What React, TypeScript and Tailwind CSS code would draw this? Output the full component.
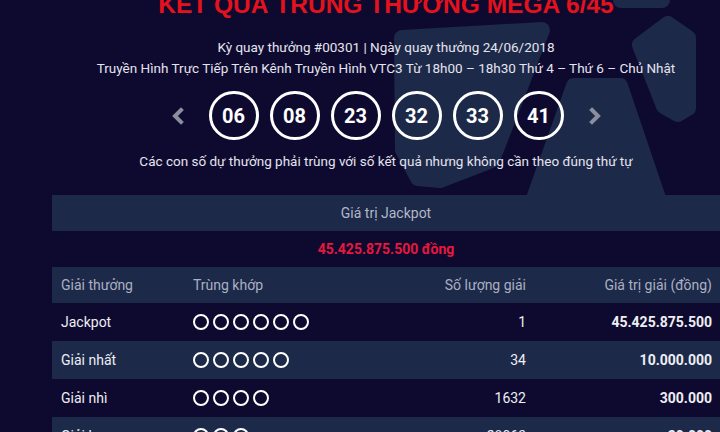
import React from "react";

const balls = ["06", "08", "23", "32", "33", "41"];

const rows = [
  { name: "Jackpot", n: 6, count: "1", value: "45.425.875.500", band: false },
  { name: "Giải nhất", n: 5, count: "34", value: "10.000.000", band: true },
  { name: "Giải nhì", n: 4, count: "1632", value: "300.000", band: false },
  { name: "Giải ba", n: 3, count: "28063", value: "30.000", band: true },
];

function Chevron({ dir }: { dir: "left" | "right" }) {
  return (
    <svg width="14" height="18" viewBox="0 0 14 18" className="shrink-0">
      <path
        d={dir === "left" ? "M10 3 L4 9 L10 15" : "M4 3 L10 9 L4 15"}
        fill="none"
        stroke="#8b8e9f"
        strokeWidth="4"
        strokeLinecap="square"
        strokeLinejoin="miter"
      />
    </svg>
  );
}

function Background() {
  const c = "#1d2949";
  return (
    <svg className="absolute left-0 top-0" width="720" height="432" viewBox="0 0 720 432">
      <g fill={c} stroke={c} strokeWidth="16" strokeLinejoin="round">
        <polygon points="402,38 542,30 492,160 440,180 418,178 403,150" />
        <polygon points="574,86 620,86 662,210 530,210" />
        <polygon points="640,45 668,24 688,38 688,108 678,114 664,106" />
        <rect x="621" y="-20" width="41" height="20" />
      </g>
    </svg>
  );
}

export default function App() {
  return (
    <div
      className="relative w-[720px] h-[432px] overflow-hidden bg-[#0e0a2f]"
      style={{ fontFamily: "Roboto, 'Noto Sans', sans-serif" }}
    >
      <Background />
      <div className="relative pl-[52px]">
        <div className="w-[668px] flex flex-col items-center">
          <div
            className="mt-[-9px] h-[28px] leading-[28px] text-[24.5px] font-bold text-[#e3121c] whitespace-nowrap"
            style={{ fontFamily: "'Liberation Sans', Arial, sans-serif" }}
          >
            KẾT QUẢ TRÚNG THƯỞNG MEGA 6/45
          </div>
          <div className="mt-[18px] text-[13.5px] leading-[21px] text-[#e4e4ee] whitespace-nowrap">
            Kỳ quay thưởng #00301 | Ngày quay thưởng 24/06/2018
          </div>
          <div className="text-[13.5px] leading-[21px] text-[#e4e4ee] whitespace-nowrap">
            Truyền Hình Trực Tiếp Trên Kênh Truyền Hình VTC3 Từ 18h00 – 18h30 Thứ 4 – Thứ 6 – Chủ Nhật
          </div>
          <div className="mt-[12px] flex items-center">
            <Chevron dir="left" />
            <div className="ml-[24px] mr-[24px] flex gap-[11px]">
              {balls.map((b) => (
                <div
                  key={b}
                  className="w-[50px] h-[49px] rounded-full border-[3px] border-white flex items-center justify-center text-white text-[20px] font-bold"
                >
                  {b}
                </div>
              ))}
            </div>
            <Chevron dir="right" />
          </div>
          <div className="mt-[11px] text-[13.5px] leading-[20px] text-[#e4e4ee] whitespace-nowrap">
            Các con số dự thưởng phải trùng với số kết quả nhưng không cần theo đúng thứ tự
          </div>
        </div>
        <div className="mt-[24px] w-[668px]">
          <div className="h-[36px] bg-[#1c2949] flex items-center justify-center text-[14px] text-[#b3b7c7]">
            Giá trị Jackpot
          </div>
          <div className="h-[36px] bg-[#0e0a2f] flex items-center justify-center text-[14px] font-bold text-[#e6183e]">
            45.425.875.500 đồng
          </div>
          <div className="h-[36px] bg-[#1c2949] grid grid-cols-[141px_207px_126px_194px] items-center text-[14px] text-[#abb0c2]">
            <div className="pl-[9px]">Giải thưởng</div>
            <div>Trùng khớp</div>
            <div className="text-right">Số lượng giải</div>
            <div className="text-right pr-[8px]">Giá trị giải (đồng)</div>
          </div>
          {rows.map((r) => (
            <div
              key={r.name}
              className={`h-[38px] grid grid-cols-[141px_207px_126px_194px] items-center text-[14px] text-[#eeeef4] ${
                r.band ? "bg-[#1c2949]" : "bg-[#0e0a2f]"
              }`}
            >
              <div className="pl-[9px]">{r.name}</div>
              <div className="flex gap-[4px]">
                {Array.from({ length: r.n }).map((_, i) => (
                  <span key={i} className="w-[16px] h-[16px] rounded-full border-[2.5px] border-white" />
                ))}
              </div>
              <div className="text-right">{r.count}</div>
              <div className="text-right pr-[8px] font-bold">{r.value}</div>
            </div>
          ))}
        </div>
      </div>
    </div>
  );
}
